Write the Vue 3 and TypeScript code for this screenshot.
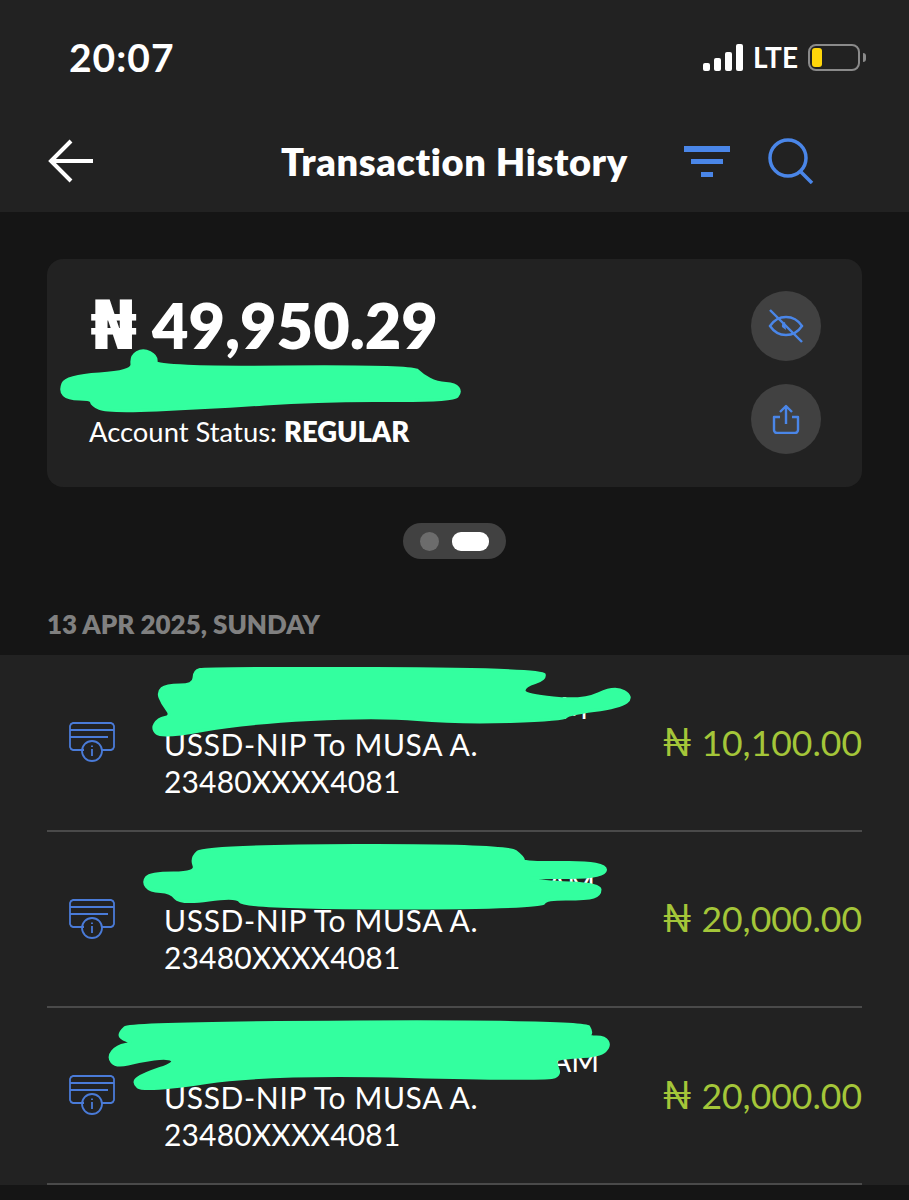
<template>
  <div class="screen">
    <header class="top">
      <div class="status">
        <span class="time">20:07</span>
        <div class="status-right">
          <div class="signal">
            <i v-for="h in [8, 13, 19, 27]" :key="h" :style="{ height: h + 'px' }"></i>
          </div>
          <span class="lte">LTE</span>
          <div class="battery"><b></b></div>
          <div class="battery-cap"></div>
        </div>
      </div>
      <div class="nav">
        <svg class="back" width="46" height="44" viewBox="0 0 46 44" fill="none" stroke="#fff" stroke-width="4">
          <path d="M45 22H4M23 2 3 22l20 20" />
        </svg>
        <h1>Transaction History</h1>
        <svg class="filter" width="46" height="31" viewBox="0 0 46 31" fill="#4a86e8">
          <rect x="0" y="0" width="46" height="6" />
          <rect x="7" y="13" width="32" height="5" />
          <rect x="17" y="26" width="12" height="5" />
        </svg>
        <svg class="search" width="46" height="46" viewBox="0 0 46 46" fill="none" stroke="#4a86e8" stroke-width="3.500">
          <circle cx="20" cy="20" r="18" />
          <path d="M32 33l12 12" />
        </svg>
      </div>
    </header>

    <main class="body">
      <section class="card">
        <div class="card-text">
          <div class="balance"><span class="naira">₦</span> 49,950.29</div>
          <div class="account-status">Account Status: <strong>REGULAR</strong></div>
        </div>
        <div class="card-actions">
          <button class="round">
            <svg width="36" height="36" viewBox="0 0 36 36" fill="none" stroke="#4a86e8" stroke-width="2.400">
              <path d="M2 18c4-6 10-9 16-9s12 3 16 9c-4 6-10 9-16 9S6 24 2 18z" />
              <path d="M17 14a4 4 0 0 0-3 5l4 3" fill="#4a86e8" stroke="none" />
              <path d="M2 2l32 32" />
            </svg>
          </button>
          <button class="round">
            <svg width="28" height="30" viewBox="0 0 28 30" fill="none" stroke="#4a86e8" stroke-width="2.400" stroke-linejoin="round">
              <path d="M14 20V2M8 8l6-6 6 6" />
              <path d="M8 13H2v13a3 3 0 0 0 3 3h18a3 3 0 0 0 3-3V13h-6" />
            </svg>
          </button>
        </div>
      </section>

      <div class="pager">
        <span class="dot"></span>
        <span class="pill"></span>
      </div>

      <div class="date">13 APR 2025, SUNDAY</div>

      <ul class="list">
        <li v-for="row in rows" :key="row.id" class="row">
          <svg class="row-icon" width="48" height="42" viewBox="0 0 48 42" fill="none" stroke="#4a7bd8" stroke-width="1.800">
            <path d="M16 29H5a4 4 0 0 1-3-3V5a4 4 0 0 1 3-3h38a4 4 0 0 1 3 3v21a4 4 0 0 1-3 3H34" />
            <path d="M2 9h44M2 16h38" />
            <circle cx="24" cy="30" r="10" />
            <path d="M24 28v7M24 24.500v1.500" />
          </svg>
          <div class="row-text">
            <div class="row-hidden"><span :style="{ marginLeft: row.amAt + 'px' }">AM</span></div>
            <div class="row-title">USSD-NIP To MUSA A.</div>
            <div class="row-phone">23480XXXX4081</div>
          </div>
          <div class="amount"><span class="amount-naira">₦</span> {{ row.amount }}</div>
        </li>
      </ul>

      <!-- marker scribbles over the screenshot -->
      <svg class="scribble" width="909" height="1200" viewBox="0 0 909 1200" fill="#33ff9f" stroke="#33ff9f" stroke-width="3" stroke-linejoin="round">
        <path v-for="(d, i) in scribbles" :key="i" :d="d" />
      </svg>
    </main>
  </div>
</template>

<script setup lang="ts">
interface Row {
  id: number;
  amount: string;
  amAt: number;
}

const rows: Row[] = [
  { id: 1, amount: "10,100.00", amAt: 376 },
  { id: 2, amount: "20,000.00", amAt: 383 },
  { id: 3, amount: "20,000.00", amAt: 387 },
];

type Pt = [number, number];

// outlines of the marker strokes, rounded off through the midpoints
const outlines: Pt[][] = [
  [[60, 391], [66, 376], [133, 372], [131, 356], [143, 349], [157, 356], [155, 368], [413, 366], [422, 375], [437, 383], [455, 384], [461, 392], [453, 401], [323, 400], [207, 408], [107, 412], [92, 405], [91, 399], [68, 399]],
  [[152, 729], [158, 719], [172, 716], [162, 703], [158, 692], [166, 685], [194, 685], [194, 671], [206, 668], [542, 669], [546, 679], [524, 686], [524, 695], [583, 701], [615, 686], [633, 697], [620, 707], [568, 714], [564, 720], [457, 723], [378, 716], [243, 723], [162, 738]],
  [[143, 882], [150, 873], [197, 873], [191, 858], [205, 846], [507, 845], [524, 858], [523, 863], [606, 862], [605, 878], [525, 877], [540, 882], [600, 884], [600, 895], [587, 899], [545, 899], [542, 908], [243, 908], [238, 896], [180, 904], [171, 892], [150, 891]],
  [[120, 1032], [130, 1023], [585, 1021], [592, 1032], [588, 1037], [605, 1037], [610, 1046], [600, 1056], [556, 1058], [556, 1065], [560, 1074], [549, 1080], [269, 1073], [144, 1092], [132, 1082], [144, 1074], [176, 1063], [168, 1057], [140, 1061], [116, 1067], [108, 1057], [117, 1046], [134, 1043], [120, 1038]],
];

function smooth(pts: Pt[]): string {
  const mid = (a: Pt, b: Pt): string => `${(a[0] + b[0]) / 2} ${(a[1] + b[1]) / 2}`;
  let d = `M${mid(pts[pts.length - 1], pts[0])}`;
  pts.forEach((p, i) => {
    d += `Q${p[0]} ${p[1]} ${mid(p, pts[(i + 1) % pts.length])}`;
  });
  return d + "Z";
}

const scribbles = outlines.map(smooth);
</script>

<style>
body {
  background: #151515;
}
</style>

<style scoped>
.screen {
  width: 909px;
  height: 1200px;
  overflow: hidden;
  background: #151515;
  color: #fff;
  font-family: Lato, "DejaVu Sans", sans-serif;
}
.top {
  height: 212px;
  box-sizing: border-box;
  padding: 37px 43px 0 47px;
  background: #222222;
}
.status {
  display: flex;
  align-items: center;
  justify-content: space-between;
  height: 40px;
  padding-left: 22px;
}
.time {
  font-size: 39px;
  font-weight: 700;
  letter-spacing: 1px;
}
.status-right {
  display: flex;
  align-items: center;
}
.signal {
  display: flex;
  align-items: flex-end;
  gap: 4px;
  margin-right: 10px;
}
.signal i {
  width: 7px;
  border-radius: 2px;
  background: #fff;
}
.lte {
  font-size: 28px;
  font-weight: 700;
  margin-right: 10px;
}
.battery {
  width: 52px;
  height: 27px;
  box-sizing: border-box;
  padding: 2px;
  border: 2px solid #8a8a8a;
  border-radius: 8px;
}
.battery b {
  display: block;
  width: 10px;
  height: 19px;
  border-radius: 3px;
  background: #ffd60a;
}
.battery-cap {
  width: 3px;
  height: 9px;
  margin-left: 3px;
  border-radius: 0 3px 3px 0;
  background: #8a8a8a;
}
.nav {
  display: flex;
  align-items: center;
  margin-top: 61px;
  height: 46px;
  padding-right: 52px;
}
.back {
  margin-left: 1px;
}
h1 {
  margin: 0 0 0 187px;
  font-size: 38px;
  font-weight: 800;
  letter-spacing: 0.6px;
  white-space: nowrap;
}
.filter {
  margin-left: auto;
}
.search {
  margin-left: 38px;
}
.body {
  position: relative;
  padding-top: 47px;
}
.card {
  display: flex;
  justify-content: space-between;
  height: 228px;
  box-sizing: border-box;
  margin: 0 47px;
  padding: 31px 41px 0 43px;
  background: #222222;
  border-radius: 16px;
}
.card-actions {
  margin-top: 1px;
}
.balance {
  font-size: 63px;
  line-height: 70px;
  font-weight: 800;
}
.naira {
  font-family: "DejaVu Sans", sans-serif;
  font-size: 68px;
  font-weight: 700;
}
.account-status {
  margin: 55px 0 0 -1px;
  font-size: 27.400px;
  line-height: 32px;
}
.account-status strong {
  font-weight: 800;
}
.card-actions {
  display: flex;
  flex-direction: column;
  gap: 23px;
}
.round {
  display: flex;
  align-items: center;
  justify-content: center;
  width: 70px;
  height: 70px;
  padding: 0;
  border: 0;
  border-radius: 50%;
  background: #414141;
}
.pager {
  display: flex;
  align-items: center;
  gap: 13px;
  width: 103px;
  height: 36px;
  box-sizing: border-box;
  margin: 36px auto 0;
  padding: 0 17px;
  border-radius: 18px;
  background: #414141;
}
.dot {
  width: 19px;
  height: 19px;
  border-radius: 50%;
  background: #6c6c6c;
}
.pill {
  width: 37px;
  height: 19px;
  border-radius: 9px;
  background: #fff;
}
.date {
  margin: 50px 0 0 47px;
  height: 46px;
  line-height: 30px;
  font-size: 26px;
  font-weight: 800;
  color: #808080;
}
.list {
  margin: 0;
  padding: 0 47px;
  list-style: none;
  background: #222222;
}
.row {
  display: flex;
  align-items: center;
  height: 176.500px;
  box-sizing: border-box;
  border-bottom: 2px solid #4a4a4a;
}
.row-icon {
  margin-left: 21px;
  flex: none;
}
.row-text {
  flex: 1;
  margin: 4px 0 0 48px;
  font-size: 30px;
  line-height: 37px;
}
.row-hidden {
  height: 37px;
}
.row-title {
  letter-spacing: 0.65px;
}
.row-phone {
  letter-spacing: 0.15px;
}
.amount {
  margin-bottom: 3px;
  font-size: 35.500px;
  color: #a4c639;
}
.amount-naira {
  font-size: 38px;
}
.scribble {
  position: absolute;
  left: 0;
  top: 0;
  margin-top: -212px;
  pointer-events: none;
}
</style>
